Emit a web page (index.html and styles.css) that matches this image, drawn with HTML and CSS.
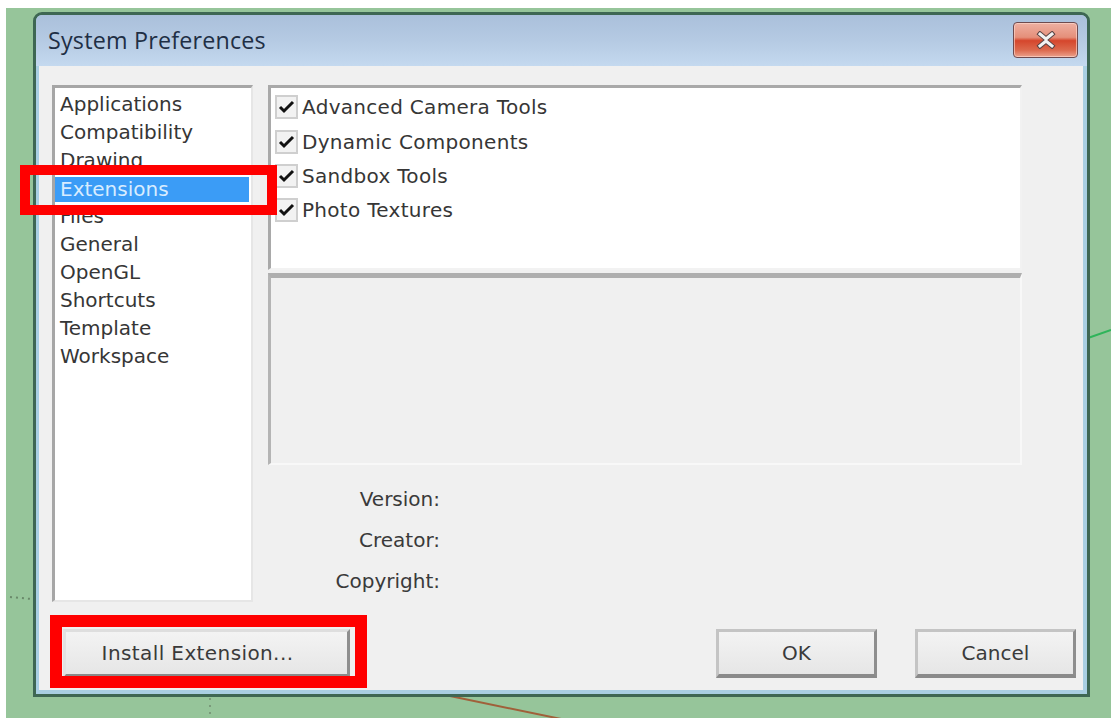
FILE: index.html
```html
<!DOCTYPE html>
<html lang="en">
<head>
<meta charset="utf-8">
<title>System Preferences</title>
<link rel="stylesheet" href="styles.css">
</head>
<body>
<div class="desktop">
  <!-- model-space edges visible behind the dialog -->
  <svg class="scene" width="1105" height="710" viewBox="0 0 1105 710" aria-hidden="true">
    <line x1="444" y1="688" x2="560" y2="712" stroke="#a0603a" stroke-width="2"/>
    <line x1="1082" y1="330" x2="1105" y2="322" stroke="#2fb45a" stroke-width="2"/>
    <line x1="4" y1="589" x2="26" y2="591" stroke="#6a8a6a" stroke-width="2" stroke-dasharray="2 4"/>
    <line x1="204" y1="690" x2="204" y2="710" stroke="#7a9a7a" stroke-width="2" stroke-dasharray="2 5"/>
  </svg>

  <div class="window">
    <div class="titlebar">
      <span class="title">System Preferences</span>
      <button class="close" aria-label="Close">
        <svg width="24" height="18" viewBox="0 0 24 18">
          <path d="M6 3 L12 8 L18 3 M6 15 L12 10 L18 15" fill="none" stroke="#5a4545" stroke-width="5" stroke-linecap="square"/>
          <path d="M6 3 L12 8 L18 3 M6 15 L12 10 L18 15" fill="none" stroke="#f2f2f2" stroke-width="3" stroke-linecap="square"/>
        </svg>
      </button>
    </div>
    <div class="frame">
      <div class="client">
        <div class="main">
          <ul class="categories">
            <li>Applications</li>
            <li>Compatibility</li>
            <li>Drawing</li>
            <li class="selected">Extensions</li>
            <li>Files</li>
            <li>General</li>
            <li>OpenGL</li>
            <li>Shortcuts</li>
            <li>Template</li>
            <li>Workspace</li>
          </ul>
          <div class="panel">
            <ul class="ext-list">
              <li><span class="check"><svg width="17" height="14" viewBox="0 0 17 14"><path d="M2 7 L6 11 L15 2" fill="none" stroke="#111" stroke-width="3"/></svg></span>Advanced Camera Tools</li>
              <li><span class="check"><svg width="17" height="14" viewBox="0 0 17 14"><path d="M2 7 L6 11 L15 2" fill="none" stroke="#111" stroke-width="3"/></svg></span>Dynamic Components</li>
              <li><span class="check"><svg width="17" height="14" viewBox="0 0 17 14"><path d="M2 7 L6 11 L15 2" fill="none" stroke="#111" stroke-width="3"/></svg></span>Sandbox Tools</li>
              <li><span class="check"><svg width="17" height="14" viewBox="0 0 17 14"><path d="M2 7 L6 11 L15 2" fill="none" stroke="#111" stroke-width="3"/></svg></span>Photo Textures</li>
            </ul>
            <div class="ext-desc"></div>
            <dl class="meta">
              <div class="meta-row"><dt>Version:</dt><dd></dd></div>
              <div class="meta-row"><dt>Creator:</dt><dd></dd></div>
              <div class="meta-row"><dt>Copyright:</dt><dd></dd></div>
            </dl>
          </div>
        </div>
        <div class="actions">
          <button class="btn btn-install">Install Extension...</button>
          <span class="spacer"></span>
          <button class="btn btn-ok">OK</button>
          <button class="btn btn-cancel">Cancel</button>
        </div>
      </div>
    </div>
  </div>

  <div class="callout callout-ext"></div>
  <div class="callout callout-install"></div>
</div>
</body>
</html>
```

FILE: styles.css
```css
* {
  box-sizing: border-box;
}

html, body {
  margin: 0;
  padding: 0;
  background: #ffffff;
  overflow: hidden;
}

body {
  font-family: "DejaVu Sans", Verdana, sans-serif;
  font-size: 20px;
  color: #2f2f2f;
}

.desktop {
  position: relative;
  margin: 8px 0 0 6px;
  width: 1105px;
  height: 710px;
  background: #96c59a;
  padding: 4px 0 0 27px;
}

.scene {
  position: absolute;
  left: 0;
  top: 0;
}

/* dialog window */
.window {
  position: relative;
  width: 1057px;
  height: 685px;
  border: 3px solid #3e6753;
  border-radius: 9px 9px 0 0;
  background: #a9cfe2;
  display: flex;
  flex-direction: column;
  overflow: hidden;
}

.titlebar {
  height: 51px;
  flex: none;
  display: flex;
  align-items: flex-start;
  justify-content: space-between;
  padding: 0 9px 0 12px;
  background: linear-gradient(#aac0db 0%, #b5cae3 50%, #c4d9ef 100%);
}

.title {
  font-family: "Open Sans", "Noto Sans", sans-serif;
  font-size: 23.3px;
  line-height: 50px;
  color: #1f2f45;
  letter-spacing: 0.2px;
}

.close {
  margin-top: 7px;
  width: 65px;
  height: 36px;
  padding: 0;
  border: 1px solid #6e4b4f;
  border-radius: 4px;
  background: linear-gradient(#eeb0a2 0%, #e58f7a 42%, #d5462c 52%, #dc6a4e 80%, #eba28d 100%);
  box-shadow: inset 0 0 0 1px rgba(255, 220, 210, 0.6);
  display: flex;
  align-items: center;
  justify-content: center;
}

.frame {
  flex: 1;
  padding: 0 4px 4px 3px;
  display: flex;
}

.client {
  flex: 1;
  background: #f0f0f0;
  display: flex;
  flex-direction: column;
}

.main {
  display: flex;
  gap: 15px;
  padding: 19px 61px 0 13px;
}

/* category list */
.categories {
  list-style: none;
  margin: 0;
  width: 201px;
  height: 517px;
  padding: 2px 2px 0 0;
  background: #ffffff;
  border-style: solid;
  border-width: 3px 2px 2px 3px;
  border-color: #a6a6a6 #e6e6e6 #e6e6e6 #a6a6a6;
}

.categories li {
  height: 28px;
  line-height: 28px;
  padding-left: 5px;
  white-space: nowrap;
  color: #363636;
}

.categories li.selected {
  background: linear-gradient(transparent 3px, #3b9cf6 3px);
  color: #d8ecff;
  line-height: 30px;
}

/* right-hand panel */
.panel {
  width: 754px;
  display: flex;
  flex-direction: column;
  gap: 3px;
}

.ext-list {
  list-style: none;
  margin: 0;
  height: 185px;
  padding: 2px 0 0 4px;
  background: #ffffff;
  border-style: solid;
  border-width: 3px 2px 2px 3px;
  border-color: #a9a9a9 #f2f2f2 #f2f2f2 #a9a9a9;
}

.ext-list li {
  height: 34.4px;
  display: flex;
  align-items: center;
  gap: 4px;
  color: #363636;
  white-space: nowrap;
  letter-spacing: 0.3px;
}

.check {
  width: 23px;
  height: 24px;
  border: 2px solid #cfcfcf;
  background: #f2f2f2;
  display: flex;
  align-items: center;
  justify-content: center;
}

.ext-desc {
  height: 192px;
  background: #f0f0f0;
  border-style: solid;
  border-width: 5px 2px 2px 3px;
  border-color: #aeaeae #f8f8f8 #f8f8f8 #b4b4b4;
}

.meta {
  margin: 10px 0 0 0;
}

.meta-row {
  display: flex;
  height: 41px;
  align-items: center;
}

.meta dt {
  width: 172px;
  text-align: right;
  color: #3a3a3a;
}

.meta dd {
  margin: 0;
}

/* bottom buttons */
.actions {
  display: flex;
  align-items: flex-start;
  gap: 38px;
  padding: 27px 7px 0 24px;
}

.spacer {
  flex: 1;
}

.btn {
  height: 49px;
  width: 161px;
  font-family: "DejaVu Sans", Verdana, sans-serif;
  font-size: 20px;
  color: #3a3a3a;
  background: linear-gradient(#f3f3f3, #e6e6e6);
  border-style: solid;
  border-width: 3px 3px 4px 3px;
  border-color: #c4c4c4 #8e8e8e #8a8a8a #c4c4c4;
  padding: 0;
}

.btn-install {
  width: 287px;
  padding-right: 18px;
  letter-spacing: 0.4px;
  border-color: #dedede #8e8e8e #8a8a8a #e2e2e2;
}

/* red highlight annotations drawn over the dialog */
.callout {
  position: absolute;
  border: 10px solid #ff0000;
}

.callout-ext {
  left: 14px;
  top: 157px;
  width: 257px;
  height: 50px;
}

.callout-install {
  left: 44px;
  top: 607px;
  width: 317px;
  height: 73px;
  border-width: 12px;
}
```
